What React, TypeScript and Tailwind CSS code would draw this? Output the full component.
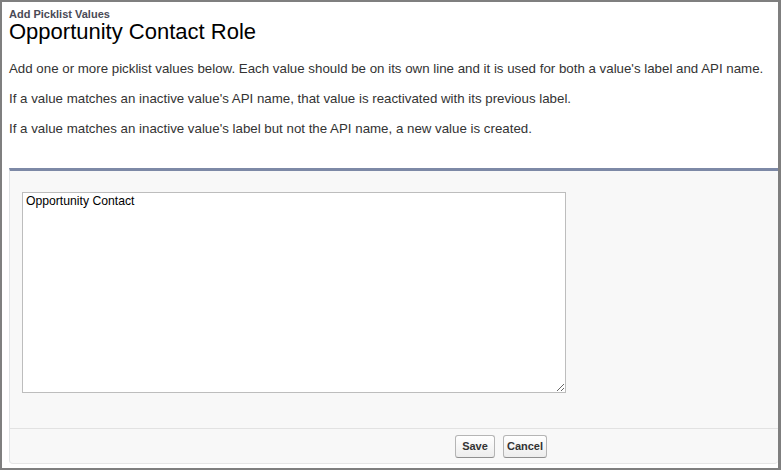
import React from "react";

export default function App() {
  return (
    <div
      className="w-[781px] h-[470px] bg-white border-[#7f7f7f] border-t-2 border-l-2 border-b-2 border-r-[3px] overflow-hidden"
      style={{ fontFamily: '"Liberation Sans", Arial, sans-serif' }}
    >
      <div className="pl-[7px] pt-[6px]">
        <div className="text-[11px] leading-[12px] font-bold text-[#4a4a56]">Add Picklist Values</div>
        <h1 className="text-[22px] leading-[24px] text-black font-normal">Opportunity Contact Role</h1>
        <div className="mt-[17px] text-[13.3px] leading-[15px] text-[#333333] flex flex-col gap-[15px]">
          <p className="whitespace-nowrap">
            Add one or more picklist values below. Each value should be on its own line and it is used for both a
            value's label and API name.
          </p>
          <p>If a value matches an inactive value's API name, that value is reactivated with its previous label.</p>
          <p>If a value matches an inactive value's label but not the API name, a new value is created.</p>
        </div>
        <div className="mt-[32px] border-t-[3px] border-[#7d89a6] bg-[#f8f8f8] border-l border-l-[#e0e3e5] border-b border-b-[#e6e6e6] rounded-b-[4px]">
          <div className="pt-[21px] pl-[12px] pb-[35px]">
            <textarea
              defaultValue="Opportunity Contact"
              className="block w-[544px] h-[201px] border border-[#bdbdbd] bg-white text-[12.2px] leading-[14px] text-black pt-[1px] px-[3px] outline-none"
              style={{ fontFamily: '"Liberation Sans", Arial, sans-serif' }}
            />
          </div>
          <div className="border-t border-[#e2e2e2] pt-[6px] pb-[5px] pl-[445px] flex gap-[8px]">
            <button className="w-[40px] h-[23px] rounded-[3px] border border-[#b5b5b5] border-b-[#8f8f8f] bg-gradient-to-b from-white to-[#ededed] text-[11px] font-bold text-[#333333]">
              Save
            </button>
            <button className="w-[44px] h-[23px] rounded-[3px] border border-[#b5b5b5] border-b-[#8f8f8f] bg-gradient-to-b from-white to-[#ededed] text-[11px] font-bold text-[#333333]">
              Cancel
            </button>
          </div>
        </div>
      </div>
    </div>
  );
}
